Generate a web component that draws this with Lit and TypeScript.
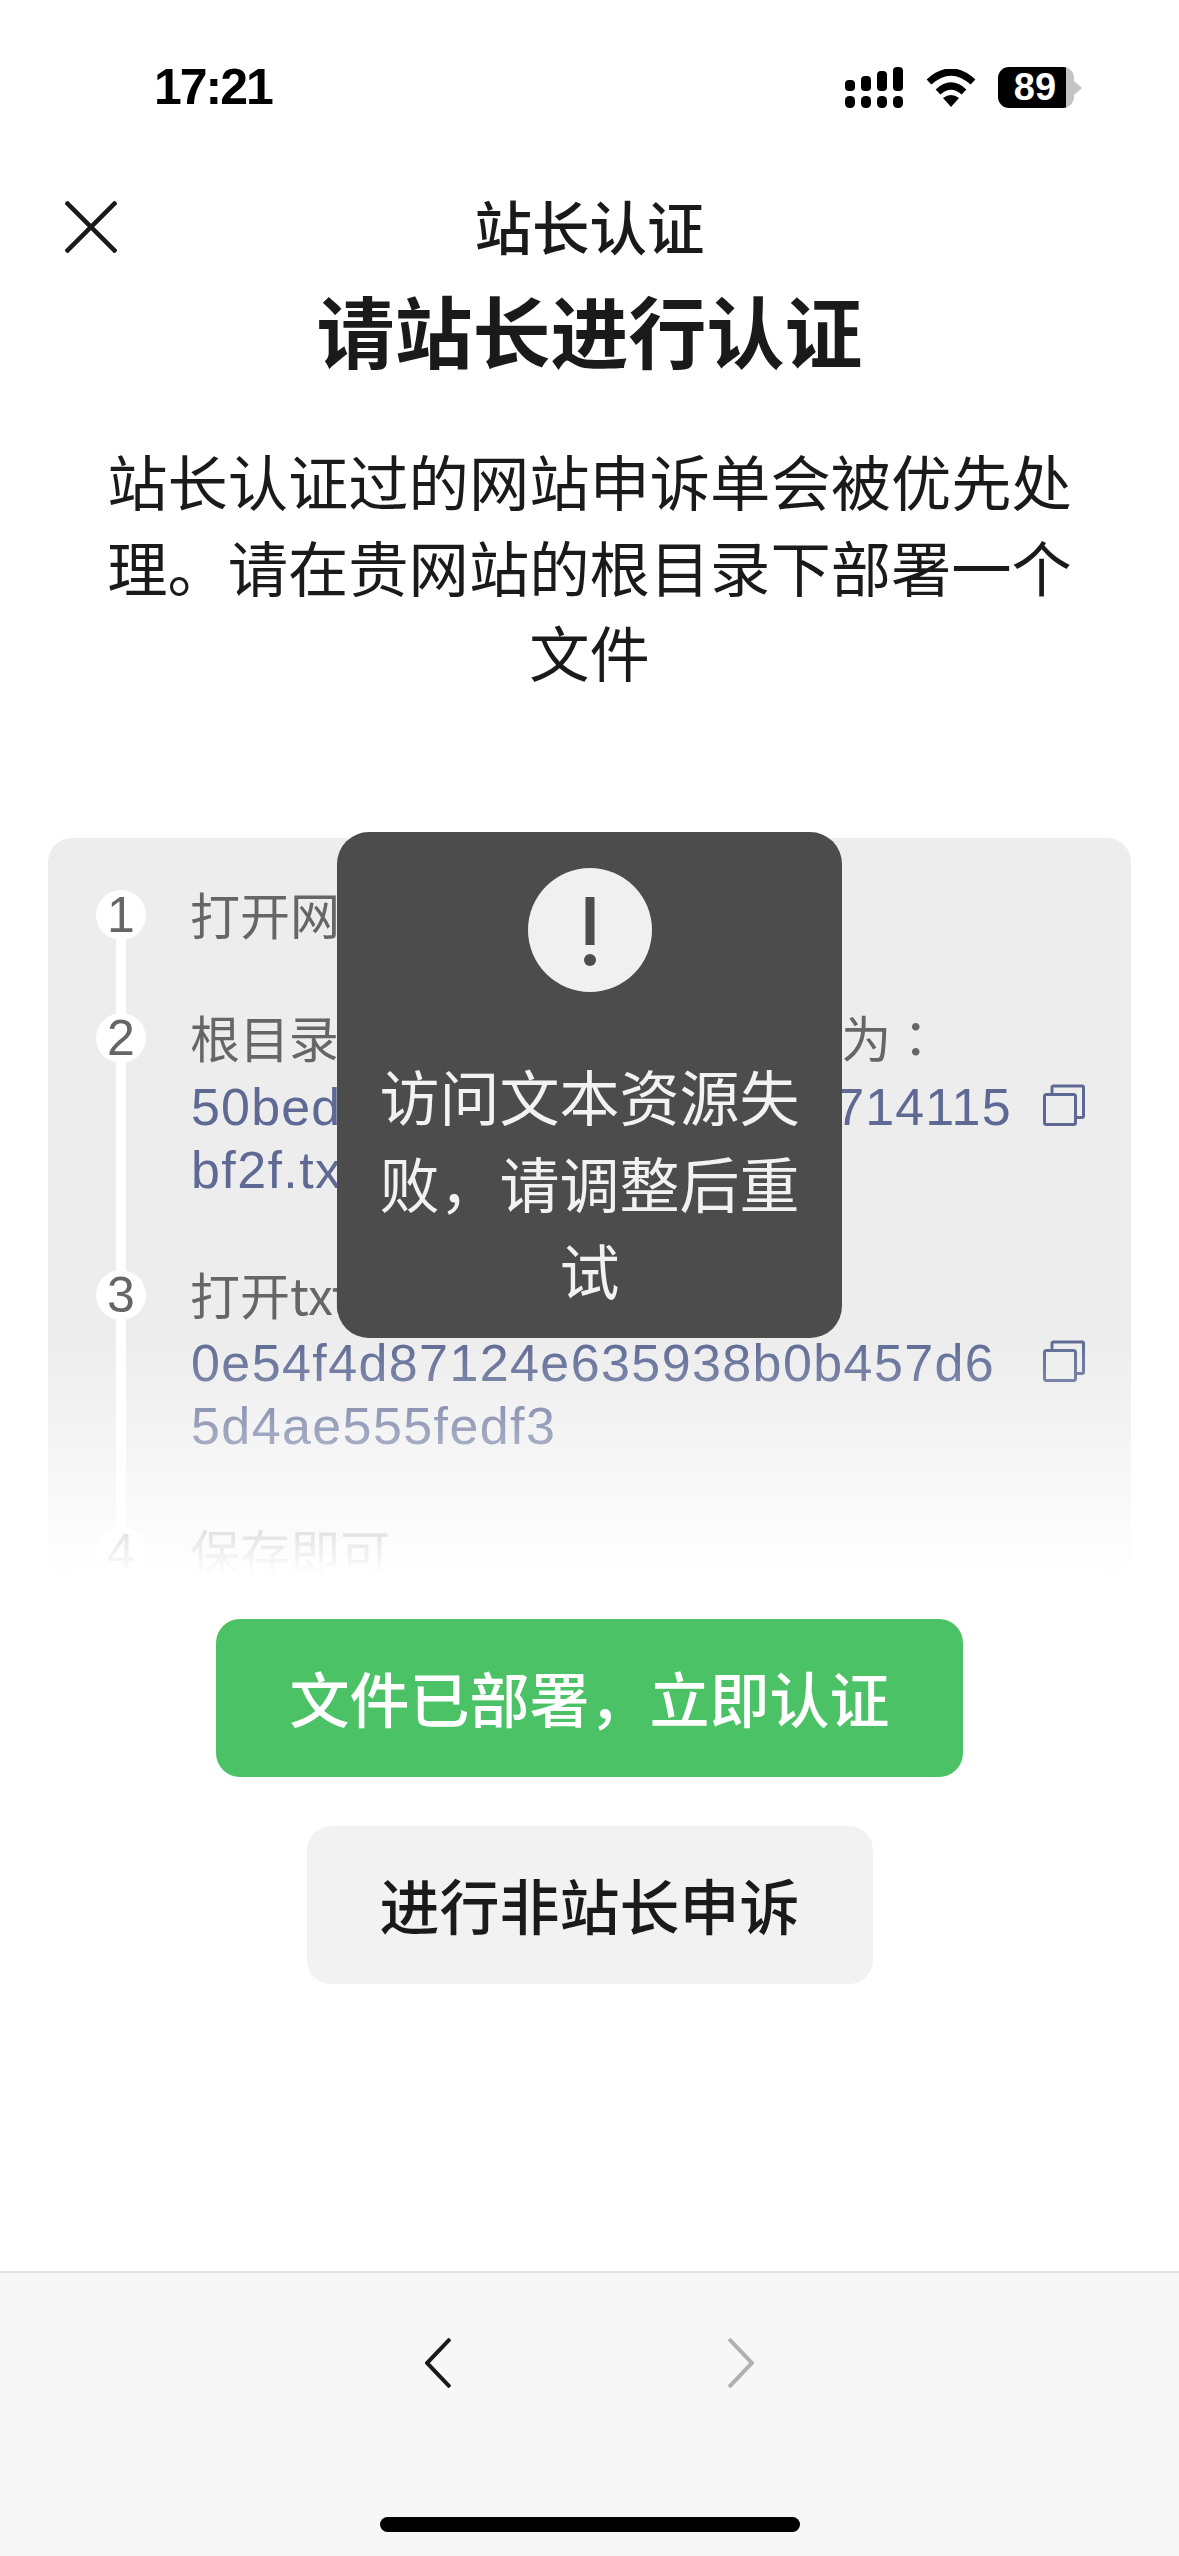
import { html, css, LitElement } from "lit";
import { customElement } from "lit/decorators.js";

const copyIcon = html`
  <svg class="copy" viewBox="0 0 42 42" fill="none" stroke="currentColor" stroke-width="3">
    <rect x="1.5" y="10.5" width="31" height="30" rx="2"></rect>
    <path d="M9 10V3.5A1.5 1.5 0 0 1 10.5 2H39a1.5 1.5 0 0 1 1.5 1.5V32a1.5 1.5 0 0 1-1.5 1.5h-6"></path>
  </svg>
`;

@customElement("app-root")
export class AppRoot extends LitElement {
  private statusBar() {
    return html`
      <div class="status">
        <span class="time">17:21</span>
        <div class="status-icons">
          <svg class="signal" viewBox="0 0 58 41" fill="#000">
            <rect x="0" y="13" width="10" height="11" rx="4"></rect>
            <rect x="16" y="9" width="10" height="15" rx="4"></rect>
            <rect x="32" y="4" width="10" height="20" rx="4"></rect>
            <rect x="48" y="0" width="10" height="24" rx="4"></rect>
            <rect x="0" y="29" width="10" height="12" rx="4.5"></rect>
            <rect x="16" y="29" width="10" height="12" rx="4.5"></rect>
            <rect x="32" y="29" width="10" height="12" rx="4.5"></rect>
            <rect x="48" y="29" width="10" height="12" rx="4.5"></rect>
          </svg>
          <svg class="wifi" viewBox="0 0 50 38">
            <path d="M3 13Q25-7 47 13" fill="none" stroke="#000" stroke-width="7"></path>
            <path d="M12 23Q25 11 38 23" fill="none" stroke="#000" stroke-width="7"></path>
            <path d="M17 29Q25 23 33 29L25 38Z" fill="#000"></path>
          </svg>
          <div class="battery"><span>89</span></div>
          <svg class="nub" viewBox="0 0 8 14"><path d="M0 0L8 7L0 14Z" fill="#c4c4c4"></path></svg>
        </div>
      </div>
    `;
  }

  private steps() {
    return html`
      <div class="card">
        <div class="rail"></div>
        <div class="step">
          <span class="num">1</span>
          <div class="body"><div class="label">打开网站根目录</div></div>
        </div>
        <div class="step second">
          <span class="num">2</span>
          <div class="body">
            <div class="label tight">根目录下创建txt文件，文件名为<span class="colon">：</span></div>
            <div class="hash-row first">
              <div class="hash"><div class="tight-hash">50bed8c21f0a47e3b96d25714115</div><div>bf2f.txt</div></div>
              ${copyIcon}
            </div>
          </div>
        </div>
        <div class="step third">
          <span class="num">3</span>
          <div class="body">
            <div class="label">打开txt文件，粘贴以下内容</div>
            <div class="hash-row">
              <div class="hash"><div>0e54f4d87124e635938b0b457d6</div><div>5d4ae555fedf3</div></div>
              ${copyIcon}
            </div>
          </div>
        </div>
        <div class="step fourth">
          <span class="num">4</span>
          <div class="body"><div class="label">保存即可</div></div>
        </div>
        <div class="fade"></div>
      </div>
    `;
  }

  override render() {
    return html`
      <div class="page">
        ${this.statusBar()}
        <header class="nav">
          <svg class="close" viewBox="0 0 52 52" fill="none" stroke="#1a1a1a" stroke-width="4.5">
            <path d="M1 1L51 51M51 1L1 51"></path>
          </svg>
          <span class="nav-title">站长认证</span>
          <span></span>
        </header>
        <h1>请站长进行认证</h1>
        <p class="intro">站长认证过的网站申诉单会被优先处理。请在贵网站的根目录下部署一个文件</p>
        ${this.steps()}
        <div class="actions">
          <button class="primary">文件已部署，立即认证</button>
          <button class="secondary">进行非站长申诉</button>
        </div>
        <footer class="bar">
          <div class="chevrons">
            <svg viewBox="0 0 26 50" fill="none" stroke="#1a1a1a" stroke-width="4"><path d="M25 1L2 25L25 49"></path></svg>
            <svg viewBox="0 0 26 50" fill="none" stroke="#b0b0b0" stroke-width="4"><path d="M1 1L24 25L1 49"></path></svg>
          </div>
          <div class="home"></div>
        </footer>
        <div class="toast">
          <div class="alert">
            <svg viewBox="0 0 14 69" fill="#4c4c4c">
              <rect x="2.5" y="0" width="9" height="48"></rect>
              <circle cx="7" cy="63" r="6"></circle>
            </svg>
          </div>
          <div class="toast-text">访问文本资源失败，请调整后重试</div>
        </div>
      </div>
    `;
  }

  static styles = css`
    :host {
      display: block;
      font-family: "Noto Sans CJK SC", "Liberation Sans", sans-serif;
      color: #1a1a1a;
    }
    .page {
      position: relative;
      width: 1179px;
      height: 2556px;
      background: #fff;
      display: flex;
      flex-direction: column;
      overflow: hidden;
    }
    .status {
      height: 187px;
      box-sizing: border-box;
      padding: 60px 97px 0 154px;
      display: flex;
      justify-content: space-between;
      align-items: flex-start;
    }
    .time {
      font: 700 50px/54px "Liberation Sans", sans-serif;
      letter-spacing: -2px;
      color: #000;
    }
    .status-icons {
      display: flex;
      align-items: center;
      height: 41px;
      margin-top: 7px;
    }
    .signal { width: 58px; height: 41px; }
    .wifi { width: 50px; height: 38px; margin-left: 23px; }
    .battery {
      width: 76px;
      height: 41px;
      margin-left: 22px;
      border-radius: 11px;
      background: linear-gradient(90deg, #000 90%, #c4c4c4 90%);
      display: flex;
      align-items: center;
      justify-content: center;
    }
    .battery span {
      font: 700 38px/41px "Liberation Sans", sans-serif;
      color: #fff;
      margin-right: 2px;
    }
    .nub { width: 8px; height: 14px; }
    .nav {
      height: 76px;
      padding: 0 65px;
      display: grid;
      grid-template-columns: 1fr auto 1fr;
      align-items: center;
    }
    .close { width: 52px; height: 52px; margin-top: 3px; }
    .nav-title { font-size: 57.5px; line-height: 76px; font-weight: 500; }
    h1 {
      margin: 16px 0 0;
      font-size: 78px;
      line-height: 100px;
      font-weight: 700;
      text-align: center;
    }
    .intro {
      margin: 58px 0 0;
      padding: 0 103px;
      font-size: 60.3px;
      line-height: 85.5px;
      text-align: center;
    }
    .card {
      position: relative;
      margin: 144.5px 48px 0;
      height: 737px;
      box-sizing: border-box;
      padding: 41.5px 46px 0 48px;
      border-radius: 24px;
      background: #ededee;
      overflow: hidden;
    }
    .rail {
      position: absolute;
      left: 68px;
      top: 60px;
      bottom: 20px;
      width: 10px;
      background: #fff;
    }
    .step {
      position: relative;
      display: grid;
      grid-template-columns: 50px 1fr;
      column-gap: 45px;
      align-items: start;
    }
    .second { margin-top: 53px; }
    .third { margin-top: 58px; }
    .fourth { margin-top: 59px; }
    .num {
      width: 50px;
      height: 50px;
      margin-top: 10px;
      border-radius: 50%;
      background: #fff;
      display: flex;
      align-items: center;
      justify-content: center;
      font: 400 50px/50px "Liberation Sans", sans-serif;
      color: #666;
    }
    .label {
      font-size: 50px;
      line-height: 70px;
      height: 68px;
      margin-bottom: 2px;
      margin-top: -2px;
      margin-left: -1px;
      padding-bottom: 2px;
      color: #666;
      white-space: nowrap;
    }
    .label.tight { letter-spacing: -0.6px; }
    .colon { font-family: "Noto Sans CJK TC", sans-serif; }
    .hash-row {
      display: flex;
      justify-content: space-between;
      margin-top: 4px;
    }
    .hash-row.first { margin-top: 5px; }
    .hash {
      font: 400 52px/63px "Liberation Sans", sans-serif;
      letter-spacing: 1.4px;
      color: #5e6a94;
      white-space: nowrap;
    }
    .tight-hash { letter-spacing: 1.15px; }
    .copy {
      width: 42px;
      height: 42px;
      margin-top: 8px;
      color: #5e6a94;
      flex: none;
    }
    .fade {
      position: absolute;
      left: 0;
      right: 0;
      top: 500px;
      bottom: 0;
      background: linear-gradient(rgba(255, 255, 255, 0), #fff 100%);
    }
    .actions {
      margin-top: 44px;
      display: flex;
      flex-direction: column;
      align-items: center;
      gap: 49px;
    }
    button {
      border: none;
      height: 158px;
      border-radius: 24px;
      font-family: inherit;
      font-size: 60px;
      font-weight: 500;
      padding: 0 0 3px;
    }
    .primary { width: 747px; background: #4bc265; color: #fff; }
    .secondary { width: 566px; background: #f2f2f2; color: #1a1a1a; }
    .bar {
      margin-top: auto;
      height: 285px;
      box-sizing: border-box;
      border-top: 2px solid #e3e3e3;
      background: #f7f7f7;
      display: flex;
      flex-direction: column;
      align-items: center;
    }
    .chevrons {
      margin-top: 65px;
      width: 329px;
      display: flex;
      justify-content: space-between;
    }
    .chevrons svg { width: 26px; height: 50px; }
    .home {
      margin-top: 129px;
      width: 420px;
      height: 15px;
      border-radius: 8px;
      background: #000;
    }
    .toast {
      position: absolute;
      left: 337px;
      top: 832px;
      width: 505px;
      height: 506px;
      box-sizing: border-box;
      padding: 36px 40px 0;
      border-radius: 32px;
      background: #4c4c4c;
      display: flex;
      flex-direction: column;
      align-items: center;
    }
    .alert {
      width: 124px;
      height: 124px;
      border-radius: 50%;
      background: #f0f0f0;
      display: flex;
      align-items: center;
      justify-content: center;
    }
    .alert svg { width: 14px; height: 69px; margin-top: 3px; }
    .toast-text {
      margin-top: 59px;
      font-size: 60px;
      line-height: 87px;
      color: #f2f2f2;
      text-align: center;
    }
  `;
}
